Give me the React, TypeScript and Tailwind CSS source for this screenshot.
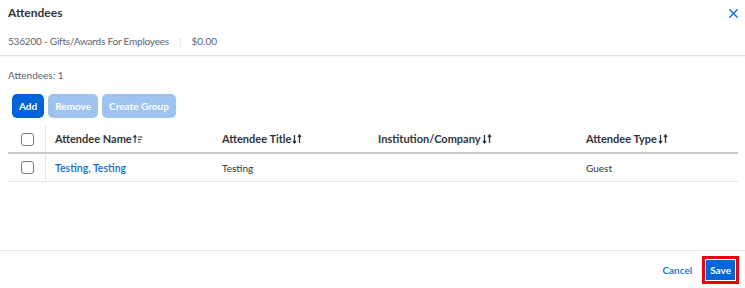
import { X } from "lucide-react";

const columns = [
  { label: "Attendee Name", sort: "asc", w: "w-[176px]" },
  { label: "Attendee Title", sort: "none", w: "w-[156px]" },
  { label: "Institution/Company", sort: "none", w: "w-[208px]" },
  { label: "Attendee Type", sort: "none", w: "flex-1" },
];

function SortIcon({ sort }: { sort: string }) {
  if (sort === "asc") {
    return (
      <svg width="10" height="10" viewBox="0 0 10 10" className="ml-[1px]">
        <path d="M2 9V2M0.5 3.5L2 1.5L3.5 3.5" stroke="#32363a" strokeWidth="1.2" fill="none" />
        <path d="M5 3h4.5M5 5.5h3.5M5 8h2.5" stroke="#32363a" strokeWidth="1" fill="none" />
      </svg>
    );
  }
  return (
    <svg width="10" height="10" viewBox="0 0 10 10" className="ml-[1px]">
      <path d="M2.5 1v8M1 7L2.5 9L4 7" stroke="#32363a" strokeWidth="1.3" fill="none" />
      <path d="M7.5 9V1M6 3L7.5 1L9 3" stroke="#32363a" strokeWidth="1.3" fill="none" />
    </svg>
  );
}

function Checkbox() {
  return <div className="h-[13px] w-[13px] rounded-[3px] border border-[#6a7b8e] bg-white" />;
}

export default function App() {
  return (
    <div className="flex h-[288px] w-[745px] flex-col bg-white font-['Lato',sans-serif] text-[10px] leading-[14px] text-[#32363a]">
      <div className="flex items-center justify-between pl-2 pr-[4px] pt-[5px]">
        <h2 className="text-[12px] font-bold leading-[16px] text-[#32363a]">Attendees</h2>
        <X size={15} strokeWidth={2.2} className="text-[#0a6ed1]" />
      </div>
      <div className="flex items-center pl-2 pt-[13px] text-[#5a6370]">
        <span className="tracking-[-0.2px]">536200 - Gifts/Awards For Employees</span>
        <span className="mx-[10px] text-[#d5d9dd]">|</span>
        <span>$0.00</span>
      </div>
      <div className="mt-[7px] h-[1px] bg-[#e0e0e0] shadow-[0_1px_2px_rgba(0,0,0,0.08)]" />

      <div className="pl-2 pt-[12px] text-[#5a6370]">Attendees: 1</div>

      <div className="flex gap-[4px] pl-[12px] pt-[12px]">
        <button className="h-[24px] rounded-[5px] bg-[#0064d9] px-[7px] font-bold text-white">Add</button>
        <button className="h-[24px] rounded-[5px] bg-[#9ec3ef] px-[7px] font-bold text-white">Remove</button>
        <button className="h-[24px] rounded-[5px] bg-[#9ec3ef] px-[7px] font-bold text-white">Create Group</button>
      </div>

      <div className="ml-[8px] mr-[7px] mt-[8px]">
        <div className="flex h-[28px] items-center border-b-2 border-[#c6cace] text-[11px]">
          <div className="flex h-full w-[38px] items-center justify-center border-r border-[#e5e5e5] pl-[2px]">
            <Checkbox />
          </div>
          {columns.map((c, i) => (
            <div key={c.label} className={`${c.w} flex items-center font-bold ${i === 0 ? "pl-[9px]" : ""}`}>
              {c.label}
              <SortIcon sort={c.sort} />
            </div>
          ))}
        </div>
        <div className="flex h-[28px] items-center border-b border-[#e5e5e5]">
          <div className="flex h-full w-[38px] items-center justify-center border-r border-[#e5e5e5] pl-[2px]">
            <Checkbox />
          </div>
          <div className="w-[176px] pl-[9px] text-[10.5px] font-semibold text-[#0a6ed1]">Testing, Testing</div>
          <div className="w-[156px]">Testing</div>
          <div className="w-[208px]"></div>
          <div className="flex-1">Guest</div>
        </div>
      </div>

      <div className="mt-auto border-t border-[#e5e5e5]">
        <div className="flex h-[37px] items-center justify-end gap-[10px] pr-[6px]">
          <button className="font-semibold text-[#0a6ed1]">Cancel</button>
          <div className="border-[3px] border-[#e8000b] p-[1px]">
            <button className="h-[20px] bg-[#0064d9] px-[4px] font-bold text-white">Save</button>
          </div>
        </div>
      </div>
    </div>
  );
}
